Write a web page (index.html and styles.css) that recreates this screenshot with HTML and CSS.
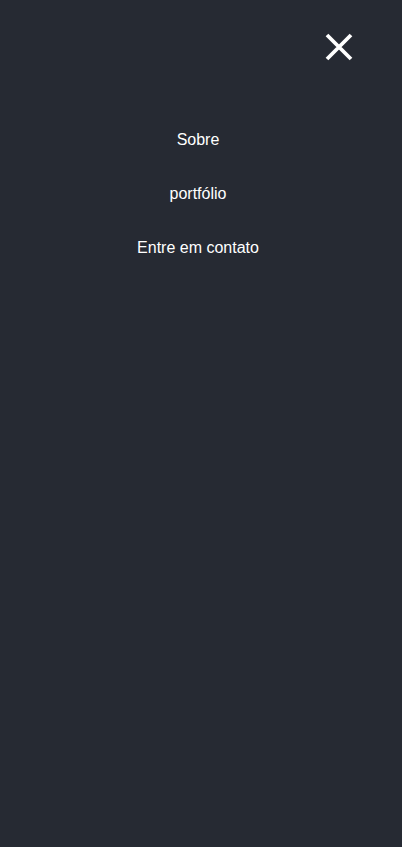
FILE: index.html
```html
<!DOCTYPE html>
<html lang="pt">
<head>
<meta charset="utf-8">
<link rel="stylesheet" href="styles.css">
</head>
<body>
<div class="menu">
  <div class="top">
    <button class="close" aria-label="Fechar">
      <svg width="28" height="28" viewBox="0 0 28 28"><path d="M2 2L26 26M26 2L2 26" stroke="#fff" stroke-width="3.8" stroke-linecap="butt"/></svg>
    </button>
  </div>
  <nav class="links">
    <a href="#">Sobre</a>
    <a href="#">portfólio</a>
    <a href="#">Entre em contato</a>
  </nav>
</div>
</body>
</html>
```
FILE: styles.css
```css
html, body {
  margin: 0;
  padding: 0;
  background: #262a33;
  height: 100%;
}
.menu {
  width: 396px;
  min-height: 847px;
  background: #262a33;
  font-family: "Liberation Sans", Arial, sans-serif;
}
.top {
  display: flex;
  justify-content: flex-end;
  padding: 33px 43px 0 0;
}
.close {
  background: none;
  border: 0;
  padding: 0;
  width: 28px;
  height: 28px;
  display: block;
}
.close svg { display: block; }
.links {
  display: flex;
  flex-direction: column;
  align-items: center;
  gap: 36px;
  margin-top: 70px;
}
.links a {
  color: #fff;
  text-decoration: none;
  font-size: 16px;
  line-height: 18px;
}
```
